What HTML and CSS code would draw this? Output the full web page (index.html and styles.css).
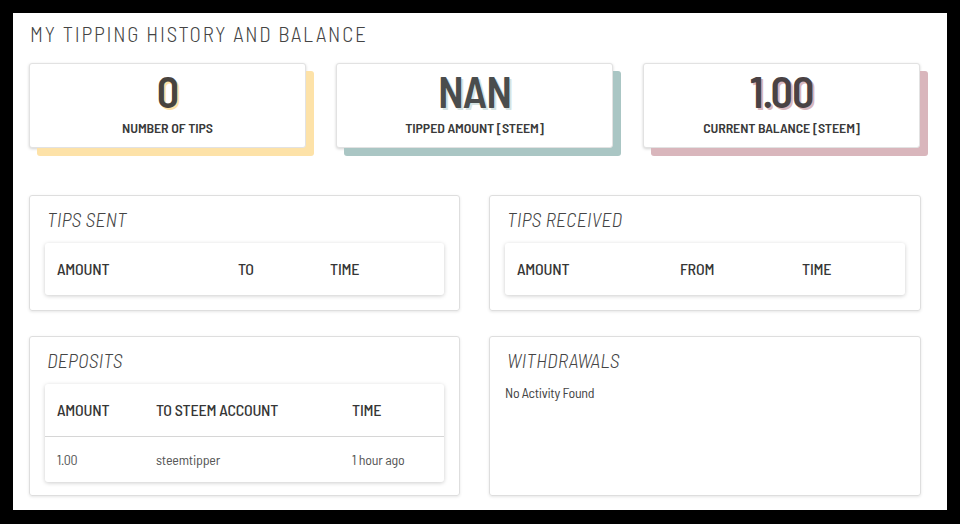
FILE: index.html
```html
<!DOCTYPE html>
<html lang="en">
  <head>
    <meta charset="UTF-8" />
    <meta name="viewport" content="width=device-width, initial-scale=1.0" />
    <title>My Tipping History and Balance</title>
    <link rel="stylesheet" href="styles.css">
  </head>
  <body>
    <div class="page">
      <h1>MY TIPPING HISTORY AND BALANCE</h1>

      <div class="stats">
        <div class="stat stat-tips">
          <div class="stat-value">0</div>
          <div class="stat-label">NUMBER OF TIPS</div>
        </div>
        <div class="stat stat-amount">
          <div class="stat-value">NAN</div>
          <div class="stat-label">TIPPED AMOUNT [STEEM]</div>
        </div>
        <div class="stat stat-balance">
          <div class="stat-value">1.00</div>
          <div class="stat-label">CURRENT BALANCE [STEEM]</div>
        </div>
      </div>

      <div class="panels">
        <div class="panel">
          <div class="panel-title">TIPS SENT</div>
          <div class="table-card">
            <table class="sent">
              <tr><th>AMOUNT</th><th>TO</th><th>TIME</th></tr>
            </table>
          </div>
        </div>

        <div class="panel">
          <div class="panel-title">TIPS RECEIVED</div>
          <div class="table-card">
            <table class="received">
              <tr><th>AMOUNT</th><th>FROM</th><th>TIME</th></tr>
            </table>
          </div>
        </div>

        <div class="panel panel-tall">
          <div class="panel-title">DEPOSITS</div>
          <div class="table-card">
            <table class="deposits">
              <tr><th>AMOUNT</th><th>TO STEEM ACCOUNT</th><th>TIME</th></tr>
              <tr><td>1.00</td><td>steemtipper</td><td>1 hour ago</td></tr>
            </table>
          </div>
        </div>

        <div class="panel panel-tall">
          <div class="panel-title">WITHDRAWALS</div>
          <div class="empty">No Activity Found</div>
        </div>
      </div>
    </div>
  </body>
</html>
```
FILE: styles.css
```css
html, body {
  height: 100%;
}

body {
  font-family: "Barlow Semi Condensed", "Roboto Condensed", "Liberation Sans Narrow", sans-serif;
  margin: 0;
  padding: 13px 13px 14px;
  box-sizing: border-box;
  background-color: #000;
  color: #333;
}

.page {
  background-color: #fff;
  height: 497px;
  padding: 10px 16px 0;
  box-sizing: border-box;
}

h1 {
  margin: 0 0 0 1px;
  font-size: 21px;
  font-weight: 300;
  letter-spacing: 1.8px;
  line-height: 22px;
  color: #444;
}

.stats {
  display: grid;
  grid-template-columns: 277px 277px 277px;
  column-gap: 30px;
  margin-top: 18px;
}

.stat {
  height: 85px;
  box-sizing: border-box;
  background-color: #fff;
  border: 1px solid #e2e2e2;
  border-radius: 3px;
  text-align: center;
  padding-top: 4px;
}

.stat-tips { box-shadow: 8px 8px 0 #fde2a8, 0 1px 3px rgba(0, 0, 0, 0.18); }
.stat-amount { box-shadow: 8px 8px 0 #aac6c4, 0 1px 3px rgba(0, 0, 0, 0.18); }
.stat-balance { box-shadow: 8px 8px 0 #d9b6bc, 0 1px 3px rgba(0, 0, 0, 0.18); }

.stat-value {
  font-size: 44px;
  font-weight: 600;
  letter-spacing: -1px;
  line-height: 46px;
  color: #48443f;
}

.stat-tips .stat-value { text-shadow: 2px 2px 0 #fde2a8; }
.stat-amount .stat-value { color: #4a4d4d; text-shadow: 2px 2px 0 #d5e3e2; }
.stat-balance .stat-value { color: #4a4244; text-shadow: 2px 2px 0 #d9b6bc; }

.stat-label {
  font-size: 14px;
  font-weight: 600;
  letter-spacing: -0.1px;
  line-height: 16px;
  margin-top: 6px;
  color: #3a3a3a;
}

.panels {
  display: grid;
  grid-template-columns: 431px 432px;
  column-gap: 29px;
  row-gap: 25px;
  margin-top: 47px;
}

.panel {
  height: 116px;
  box-sizing: border-box;
  border: 1px solid #dedede;
  border-radius: 3px;
  box-shadow: 0 1px 3px rgba(0, 0, 0, 0.1);
  padding: 11px 15px 0;
}

.panel-tall {
  height: 160px;
}

.panel-title {
  font-size: 20px;
  font-weight: 300;
  font-style: italic;
  letter-spacing: 0.2px;
  line-height: 24px;
  color: #444;
  margin-left: 2px;
  margin-bottom: 12px;
}

.table-card {
  background-color: #fff;
  border-radius: 3px;
  box-shadow: 0 1px 4px rgba(0, 0, 0, 0.2);
}

table {
  width: 100%;
  border-collapse: collapse;
  table-layout: fixed;
}

th {
  text-align: left;
  font-size: 16px;
  font-weight: 500;
  letter-spacing: -0.2px;
  line-height: 28px;
  padding: 12px;
  color: #363636;
}

td {
  font-size: 14px;
  line-height: 21px;
  padding: 12px;
  color: #555;
  letter-spacing: -0.2px;
  border-top: 1px solid #d6d6d6;
}

.sent th:nth-child(1) { width: 157px; }
.sent th:nth-child(2) { width: 68px; }

.received th:nth-child(1) { width: 139px; }
.received th:nth-child(2) { width: 98px; }

.deposits th:nth-child(1) { width: 75px; }
.deposits th:nth-child(2) { width: 172px; }

.empty {
  font-size: 14px;
  letter-spacing: -0.3px;
  line-height: 20px;
  color: #444;
  margin-top: -1px;
}
```
